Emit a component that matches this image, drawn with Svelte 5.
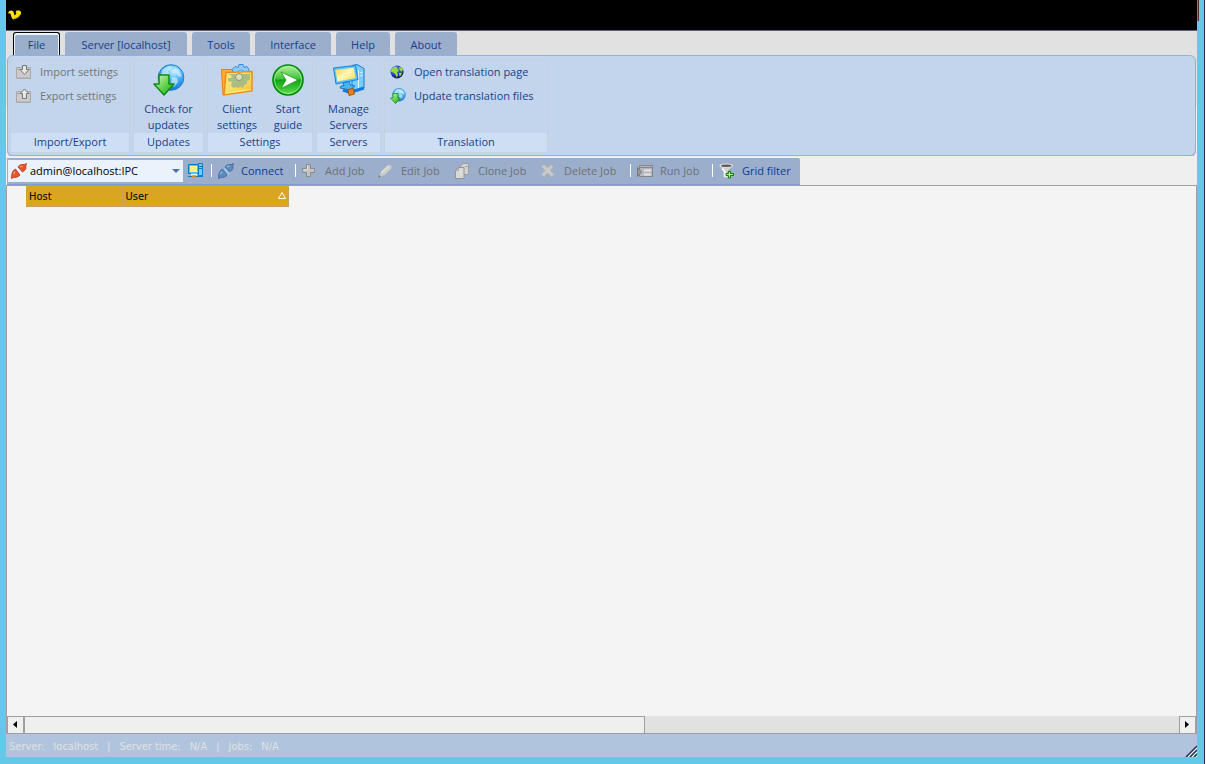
<script>
  const tabs = ['File', 'Server [localhost]', 'Tools', 'Interface', 'Help', 'About'];
  let active = $state('File');
  let account = $state('admin@localhost:IPC');

  const tools = [
    { icon: 'plug', label: 'Connect', on: true, sep: true },
    { icon: 'plus', label: 'Add Job', on: false, sep: true },
    { icon: 'pencil', label: 'Edit Job', on: false },
    { icon: 'clone', label: 'Clone Job', on: false },
    { icon: 'cross', label: 'Delete Job', on: false },
    { icon: 'run', label: 'Run Job', on: false, sep: true },
    { icon: 'filter', label: 'Grid filter', on: true, sep: true }
  ];
</script>

{#snippet plug(main, dark, light, joined)}
  <svg width="16" height="16" viewBox="0 0 16 16" aria-hidden="true">
    {#if joined}
      <path d="m5.500 6 2-1.500 5 5.500-2 2Z" fill={light} />
    {/if}
    <path d="M.5 15.500.8 11.500 1.500 9 3 7 4.500 6 9 12 7.500 13.500 5 14.300 2.500 14.500Z" fill={main} stroke={dark} stroke-width=".8" />
    <path d="M7 4 8.500 2.300 10.500 1.500 13.500 1.500 15.500.500 14.800 3 15 5.500 13.500 7.500 11.500 9Z" fill={main} stroke={dark} stroke-width=".8" />
    <path d="M2.500 11 4 8.500M9 4l2.500-1" stroke={light} stroke-width="1.300" />
  </svg>
{/snippet}

{#snippet globe(size)}
  <svg width={size} height={size} viewBox="0 0 32 32" aria-hidden="true">
    <defs>
      <radialGradient id="sea{size}" cx=".6" cy=".25" r=".8"><stop offset="0" stop-color="#c8f2ff" /><stop offset=".45" stop-color="#4fb4f5" /><stop offset="1" stop-color="#0868d8" /></radialGradient>
      <linearGradient id="arr{size}" x2="1" y2="1"><stop offset="0" stop-color="#d8f8c0" /><stop offset=".55" stop-color="#5ed048" /><stop offset="1" stop-color="#1da51c" /></linearGradient>
    </defs>
    <circle cx="18" cy="13.500" r="12.800" fill="url(#sea{size})" stroke="#1580dd" />
    <path d="M9 6q4-4 9-4l1 3-4 2 1 3-5 3-3-2zM22 4l4 2 3 6-3 1-2-3-3-1zM19 13l5 1 1 4-4 5-3-4z" fill="#d3f1ff" opacity=".65" />
    <path d="M6 11h10v9h5L11 31 1 20h5Z" fill="url(#arr{size})" stroke="#0f8a13" stroke-width="1.500" stroke-linejoin="round" />
  </svg>
{/snippet}

{#snippet box(up)}
  <svg width="16" height="16" viewBox="0 0 16 16" aria-hidden="true">
    <path d="M.5 3.500h14v11H.5zM.500 5.500h14" fill="#cbcbcb" stroke="#aaa" />
    <path d="M1 13.500h13" stroke="#bbb" />
    {#if up}
      <path d="m8.500 1 4.500 4.500h-2.500v5h-4v-5H4Z" fill="#e6e6e6" stroke="#777" />
    {:else}
      <path d="M6.500 1.500h4v4H13L8.500 10.500 4 5.500h2.500Z" fill="#e6e6e6" stroke="#777" />
    {/if}
  </svg>
{/snippet}

{#snippet toolIcon(name)}
  {#if name === 'plug'}
    {@render plug('#5f87c3', '#40659f', '#9cc8d8', true)}
  {:else}
    <svg width="16" height="16" viewBox="0 0 16 16" aria-hidden="true">
      {#if name === 'plus'}
        <path d="M4.500 1.500h4v4h4v4h-4v4h-4v-4h-4v-4h4z" fill="#c4c4c4" stroke="#8a8a8a" stroke-linejoin="round" />
        <path d="M5.500 2.500v4h-4" stroke="#dedede" fill="none" />
      {:else if name === 'pencil'}
        <path d="m1 14 1.500-4.500L9.500 2.500q2-1.500 3.500 0t0 3.500L6 12.500Z" fill="#cdcdcd" stroke="#b5b5b5" stroke-width=".7" />
        <path d="m3.500 9.500 7-6.500" stroke="#e2e2e2" stroke-width="1.500" />
        <path d="m.500 14.500.7-2.200 1.500 1.500z" fill="#666" />
      {:else if name === 'clone'}
        <path d="M5.500 3.500 8 .500h5.500v11h-8z" fill="#d3d3d3" stroke="#9d9d9d" />
        <path d="m.500 7.500 3-3H9v11H.500z" fill="#dadada" stroke="#939393" />
        <path d="M.500 7.500h3v-3M10 3.500h3" fill="none" stroke="#a8a8a8" />
      {:else if name === 'cross'}
        <path d="m.5 3.500 2.500-2L6.500 5 10 1.500l2.500 2L9.500 7.500l3.500 4-2.500 2.500-4-4-3.500 4L.5 11.500l3.500-4Z" fill="#cacaca" stroke="#b0b0b0" stroke-width=".8" />
      {:else if name === 'run'}
        <path d="M2.500 2.500h13v11h-13z" fill="#b5b9bf" stroke="#858585" />
        <path d="M3 4.500h12" stroke="#888" />
        <path d="M7 7.500h7M7 11.500h7" stroke="#e3e3e3" stroke-width="2" />
        <path d="M.500 4.500v9l4-4.500z" fill="#9c9c9c" stroke="#777" />
      {:else}
        <path d="M.5 2.500 4.500 8v6.500h5V8l4.500-5.500Z" fill="#d2d2d2" />
        <path d="M3 5.500 6 9v5" stroke="#fff" stroke-width="1.500" fill="none" />
        <path d="M12 5.500 9 8.500v4" stroke="#8e8e8e" fill="none" />
        <ellipse cx="7.300" cy="2.500" rx="6.800" ry="2" fill="#e9e9e9" />
        <ellipse cx="7.300" cy="2.700" rx="5.300" ry="1.200" fill="#5a5a5a" />
        <path d="M9.500 8.500h2v2h3v2h-3v2.500h-2v-2.500h-2.500v-2h2.500z" fill="#b8ff90" stroke="#087b08" />
      {/if}
    </svg>
  {/if}
{/snippet}

<div class="desk">
  <div class="window">
    <header class="title">
      <svg width="16" height="12" viewBox="0 0 16 12" aria-hidden="true">
        <path d="M1 4.500Q1.500 1.500 4.500 1.500 7 2 7 4.500L7.500 6.500Q9.300 5.500 9.500 3.800L8.500 3.500 9.500 1.500H12.500Q15 2.500 13.500 5.500 11.500 9.500 6 10.500 4 8.500 3.800 5.500 3 3.800 1 4.500Z" fill="#ffe600" />
        <path d="M6 10q5-1 7.500-5" stroke="#e0a000" fill="none" />
      </svg>
    </header>

    <nav class="tabs">
      {#each tabs as tab}
        <button class:active={active === tab} onclick={() => (active = tab)}>{tab}</button>
      {/each}
    </nav>

    <div class="ribbon-area">
      <div class="ribbon">
        <section>
          <div class="list muted">
            <button disabled>{@render box(false)}Import settings</button>
            <button disabled>{@render box(true)}Export settings</button>
          </div>
          <h2>Import/Export</h2>
        </section>
        <section>
          <div class="big">
            <button>{@render globe(32)}<span>Check for updates</span></button>
          </div>
          <h2>Updates</h2>
        </section>
        <section>
          <div class="big pair">
            <button>
              <svg width="32" height="32" viewBox="0 0 32 32" aria-hidden="true">
                <defs>
                  <linearGradient id="folder" x2="1" y2="1"><stop offset="0" stop-color="#ffe98a" /><stop offset=".6" stop-color="#f5dc5a" /><stop offset="1" stop-color="#ffb52a" /></linearGradient>
                </defs>
                <path d="M.5 5.500h12l2 3-10 20.500-2.500 2Z" fill="#ffae3d" stroke="#f07d0d" />
                <path d="m18 .500 4 0 1 3 3-1 2 3-1 3 4 1v5H9v-5l3-1-1-3 3-3 3 1Z" fill="#8bccf5" stroke="#2d8ee0" />
                <circle cx="20" cy="9" r="3" fill="#c8e7fb" stroke="#4fa6ea" />
                <path d="m5 8.500 26-1V27L3 31Z" fill="url(#folder)" stroke="#f18a14" stroke-width="1.400" />
                <path d="M7 10h22v6l-3 1v3l-3 1-1 3-3-1-2 1-2-1-3 1-2-3 1-3-4-1v-3h3l1-2Z" fill="#a3b987" opacity=".9" />
                <circle cx="18" cy="13" r="3.500" fill="#e2dfae" stroke="#7d9b83" />
                <path d="m6 29 24-3.500" stroke="#fff08e" />
              </svg>
              <span>Client settings</span>
            </button>
            <button>
              <svg width="32" height="32" viewBox="0 0 32 32" aria-hidden="true">
                <defs>
                  <linearGradient id="go" x2="0" y2="1"><stop offset="0" stop-color="#b9f0a7" /><stop offset=".45" stop-color="#42c43c" /><stop offset=".5" stop-color="#12a313" /><stop offset="1" stop-color="#5de052" /></linearGradient>
                </defs>
                <circle cx="16" cy="16" r="15" fill="url(#go)" stroke="#068a0a" stroke-width="1.600" />
                <circle cx="16" cy="16" r="13.500" fill="none" stroke="#a5eda0" opacity=".7" />
                <path d="m9 8 17 8L9 24.500l5-8.500Z" fill="#fff" stroke="#159a18" stroke-width=".8" />
              </svg>
              <span>Start guide</span>
            </button>
          </div>
          <h2>Settings</h2>
        </section>
        <section>
          <div class="big">
            <button>
              <svg width="32" height="32" viewBox="0 0 32 32" aria-hidden="true">
                <defs>
                  <linearGradient id="screen" x2="1" y2="1"><stop offset="0" stop-color="#ffd83f" /><stop offset=".5" stop-color="#fff6b8" /><stop offset="1" stop-color="#ffdb40" /></linearGradient>
                </defs>
                <path d="m19 1.500 5-1 7 4V24l-7 3-5-3Z" fill="#7cccf8" stroke="#1679cf" />
                <path d="M25.500 6v20M27 9l3-1M27 12l3-1" stroke="#d8f3ff" />
                <path d="m.500 4 22-2.500L25 15.500 3 20Z" fill="#64c5fb" stroke="#1583d9" />
                <path d="m2.500 6 18-2.300L22.500 14 4.500 17.500Z" fill="url(#screen)" />
                <path d="m10 19 6-1.500 1.500 3.500 4.500 1-5 4-10-2 1-2 3-.500Z" fill="#4ab2f5" stroke="#177bd0" />
                <path d="m10 26 7 2.500 14-4.500" fill="none" stroke="#147bd4" stroke-width="3" />
                <path d="m15 25.500 5-1 1.500 5.500-5.500 1.500Z" fill="#d9872e" stroke="#a65509" />
              </svg>
              <span>Manage Servers</span>
            </button>
          </div>
          <h2>Servers</h2>
        </section>
        <section>
          <div class="list">
            <button>
              <svg width="16" height="16" viewBox="0 0 16 16" aria-hidden="true">
                <defs>
                  <radialGradient id="earth" cx=".35" cy=".3" r=".75"><stop offset="0" stop-color="#7a9af5" /><stop offset=".6" stop-color="#2536b8" /><stop offset="1" stop-color="#080f55" /></radialGradient>
                </defs>
                <circle cx="7" cy="8" r="6.500" fill="url(#earth)" />
                <path d="m1.500 5 3-2.500 2.500.500.500 2 1.500 2-2 1 1 3-1 2.500L5 10 3.500 8.500 1 8ZM9 3l3 .500L13 6l-1.500 2L9.500 6ZM9 9l3-.500-1 3-1.500 1Z" fill="#8fdc3e" />
              </svg>Open translation page
            </button>
            <button>{@render globe(16)}Update translation files</button>
          </div>
          <h2>Translation</h2>
        </section>
      </div>
    </div>

    <div class="strip">
      <div class="toolbar">
        <div class="combo">
          {@render plug('#e8552d', '#b93312', '#ffab7d', false)}
          <select aria-label="Connection" bind:value={account}>
            <option>admin@localhost:IPC</option>
          </select>
          <svg width="8" height="4" viewBox="0 0 8 4" aria-hidden="true"><path d="M0 0h8L4 4z" fill="#4f73ad" /></svg>
        </div>
        <button class="screen" aria-label="Servers">
          <svg width="16" height="16" viewBox="0 0 16 16" aria-hidden="true">
            <path d="M10.500.500h4v12h-4z" fill="#74cdf9" stroke="#087fcb" />
            <path d="M11 3.500h3M11 5.500h3" stroke="#087fcb" />
            <path d="M.500 1.500h10v9H.500z" fill="#52c5ff" stroke="#0878c5" />
            <path d="M2 3h7v6H2z" fill="#fff27c" />
            <path d="M3 11.500h6" stroke="#dff6ff" stroke-width="2" />
            <path d="M0 13.500h15" stroke="#087fcb" />
            <path d="M4 13.500h4" stroke="#df8419" stroke-width="2" />
          </svg>
        </button>
        {#each tools as t}
          <button class="tool" class:sep={t.sep} disabled={!t.on}>{@render toolIcon(t.icon)}{t.label}</button>
        {/each}
      </div>
    </div>

    <main>
      <table>
        <thead>
          <tr>
            <th class="host">Host</th>
            <th><div>User
              <svg width="9" height="9" viewBox="0 0 9 9" aria-hidden="true"><path d="M5 .500 8.500 6.500H1.500Z" fill="none" stroke="#fff" /></svg></div>
            </th>
          </tr>
        </thead>
      </table>
      <div class="scroll">
        <button aria-label="Scroll left"><svg width="5" height="8" viewBox="0 0 5 8"><path d="M4 0v7L0 3.500z" /></svg></button>
        <div class="track"><div class="thumb"></div></div>
        <button aria-label="Scroll right"><svg width="5" height="8" viewBox="0 0 5 8"><path d="M0 0v7l4-3.500z" /></svg></button>
      </div>
    </main>

    <footer>
      <span>Server:</span><span>localhost</span><span>|</span><span>Server time:</span><span>N/A</span><span>|</span><span>Jobs:</span><span>N/A</span>
      <svg class="grip" width="12" height="12" viewBox="0 0 12 12" aria-hidden="true">
        <path d="M1 12 12 1M5 12l7-7M9 12l3-3" stroke="#23395f" stroke-width="1.500" />
        <path d="m3 12 9-9M7 12l5-5M11 12l1-1" stroke="#fff" />
      </svg>
    </footer>
  </div>
  <aside></aside>
</div>

<style>
  :global(body) { margin: 0; }
  * { box-sizing: border-box; }
  .desk {
    display: flex;
    height: 100vh;
    background: #64c8e8;
    font: 11px/16px "Open Sans", "Noto Sans", sans-serif;
    color: #15428b;
  }
  .window {
    flex: 1;
    min-width: 0;
    display: flex;
    flex-direction: column;
    margin: 0 0 7px 6px;
  }
  aside {
    width: 9px;
    background:
      linear-gradient(90deg, #b5625c 1px, #5c2a2a 1px) 0 0 / 2px 21px no-repeat,
      linear-gradient(90deg, transparent 7px, #292f36 7px, #292f36 8px, #fff 8px);
  }
  button {
    font: inherit;
    color: inherit;
    background: none;
    border: 0;
    padding: 0;
    white-space: nowrap;
  }
  svg { display: block; flex: none; }
  .title {
    height: 31px;
    background: #000;
    border-bottom: 1px solid #56677d;
    padding: 9px 0 0 1px;
  }
  .tabs {
    display: grid;
    grid-template-columns: 47px 122px 58px 76px 54px 62px;
    column-gap: 5px;
    padding: 1px 0 0 7px;
    background: #e1e1e1;
    height: 24px;
  }
  .tabs button {
    background: #9baecb;
    border-radius: 3px 3px 0 0;
    height: 23px;
    padding-top: 2px;
  }
  .tabs .active {
    border: 1px solid #000;
    border-bottom: 0;
    box-shadow: inset 1px 2px #e5f7fd, inset -1px 0 #e5f7fd;
    padding-top: 1px;
  }
  .ribbon-area { background: linear-gradient(#e1e1e1 50%, #efefef 50%); }
  .ribbon {
    display: grid;
    grid-template-columns: 120px 71px 106px 65px 164px;
    column-gap: 3px;
    background: #c3d5ed;
    border: 1px solid #8db2e3;
    border-radius: 6px;
    box-shadow: 0 1px #b5b5b5;
    margin: 0 1px;
    padding: 3px 2px;
    height: 101px;
  }
  section {
    display: flex;
    flex-direction: column;
    border: 1px solid #c3d1e0;
    border-radius: 3px;
  }
  h2 {
    margin: auto 0 0;
    font: inherit;
    height: 19px;
    line-height: 17px;
    text-align: center;
    background: #cedff5;
  }
  .list { display: grid; row-gap: 8px; padding: 4px 0 0 5px; }
  .list button { display: flex; align-items: center; gap: 8px; height: 16px; }
  .muted button { color: #747474; }
  .big { display: flex; justify-content: center; padding: 4px 0 0; }
  .big button { flex: 1; display: flex; flex-direction: column; align-items: center; }
  .pair { gap: 8px; padding: 4px 2px 0 8px; }
  .pair button { flex: 0 0 42px; }
  .pair button + button { flex: 1; }
  .big span { white-space: normal; padding-top: 5px; }
  .strip { background: #efefef; padding: 2px 1px 0; }
  .toolbar {
    display: grid;
    grid-template-columns: 178px 26px 84px 77px 77px 86px 95px 82px 88px;
    width: max-content;
    height: 27px;
    background: #9baecb;
    border-bottom: 1px solid #7b9fd4;
    border-radius: 0 2px 0 0;
  }
  .combo {
    display: flex;
    align-items: center;
    background: #eaf2fb;
    margin: 2px 2px 2px 1px;
    padding: 0 3px;
  }
  select {
    appearance: none;
    flex: 1;
    min-width: 0;
    border: 0;
    background: none;
    font: inherit;
    color: #000;
    padding: 0 0 0 3px;
  }
  .screen { padding-left: 3px; }
  .tool {
    display: flex;
    align-items: center;
    gap: 7px;
    padding-left: 6px;
    color: #103a91;
  }
  .tool:disabled { color: #6d7177; }
  .sep {
    padding-left: 7px;
    background: linear-gradient(#fff, #fff) 0 6px / 1px 13px no-repeat;
  }
  main {
    flex: 1;
    min-height: 0;
    display: flex;
    flex-direction: column;
    background: #f4f4f4;
    border: 1px solid #a0a0a0;
  }
  table {
    width: 263px;
    margin-left: 19px;
    border-collapse: collapse;
    table-layout: fixed;
    background: #daa520;
    color: #000;
    font: 11px/16px "DejaVu Sans Condensed", "DejaVu Sans", sans-serif;
  }
  th {
    height: 20px;
    font-weight: normal;
    text-align: left;
    padding: 2px 2px 0 3px;
    border-right: 1px dotted #b8a070;
    border-bottom: 1px dotted #b8a070;
  }
  th div { display: flex; align-items: center; justify-content: space-between; }
  .host { width: 96px; }
  .scroll {
    display: flex;
    margin-top: auto;
    height: 17px;
    background: #e1e1e1;
  }
  .scroll button {
    width: 17px;
    display: grid;
    place-items: center;
    background: #f0f0f0;
    border: 1px solid #a0a0a0;
    border-bottom: 0;
  }
  .track { flex: 1; }
  .thumb {
    width: 53.8%;
    height: 17px;
    background: #efefef;
    border: 1px solid #a0a0a0;
    border-bottom: 0;
  }
  footer {
    display: flex;
    align-items: center;
    gap: 9px;
    height: 23px;
    padding: 2px 0 0 3px;
    background: #b0c4de;
    color: #e1e1e1;
    font: 11px/16px "DejaVu Sans Condensed", "DejaVu Sans", sans-serif;
  }
  .grip { margin-left: auto; align-self: flex-end; }
</style>
